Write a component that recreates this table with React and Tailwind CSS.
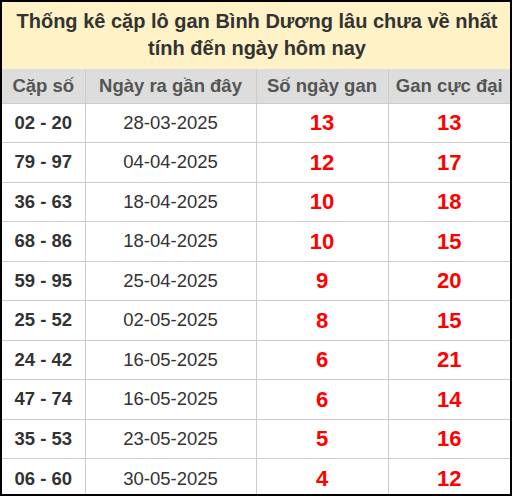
const rows = [
  ['02 - 20', '28-03-2025', 13, 13],
  ['79 - 97', '04-04-2025', 12, 17],
  ['36 - 63', '18-04-2025', 10, 18],
  ['68 - 86', '18-04-2025', 10, 15],
  ['59 - 95', '25-04-2025', 9, 20],
  ['25 - 52', '02-05-2025', 8, 15],
  ['24 - 42', '16-05-2025', 6, 21],
  ['47 - 74', '16-05-2025', 6, 14],
  ['35 - 53', '23-05-2025', 5, 16],
  ['06 - 60', '30-05-2025', 4, 12],
];

export default function App() {
  return (
    <div className="relative w-[512px] h-[496px] overflow-hidden bg-white font-['Liberation_Sans',Arial,sans-serif]">
      <div className="ml-[2px] mt-[2px]">
        <div className="bg-[#fff2c6] text-[#333] font-bold text-[20px] leading-[27px] text-center pt-[6px] pb-[7px]">
          Thống kê cặp lô gan Bình Dương lâu chưa về nhất
          <br />
          tính đến ngày hôm nay
        </div>
        <table className="w-[508px] table-fixed border-collapse">
          <colgroup>
            <col className="w-[83px]" />
            <col className="w-[171px]" />
            <col className="w-[132px]" />
            <col />
          </colgroup>
          <thead>
            <tr className="bg-[#ddd] text-[#555] text-[18.5px] font-bold h-[34px]">
              <th className="border-r border-[#ccc] font-bold">Cặp số</th>
              <th className="border-r border-[#ccc] font-bold">Ngày ra gần đây</th>
              <th className="border-r border-[#ccc] font-bold">Số ngày gan</th>
              <th className="font-bold">Gan cực đại</th>
            </tr>
          </thead>
          <tbody>
            {rows.map((r) => (
              <tr key={r[0]} className="h-[39.5px] border-t border-[#ccc] text-center">
                <td className="border-r border-[#ccc] text-[18.5px] font-bold text-[#333]">{r[0]}</td>
                <td className="border-r border-[#ccc] text-[18.5px] text-[#333]">{r[1]}</td>
                <td className="border-r border-[#ccc] text-[22px] font-bold text-[#f00]">{r[2]}</td>
                <td className="text-[22px] font-bold text-[#f00]">{r[3]}</td>
              </tr>
            ))}
          </tbody>
        </table>
      </div>
      <div className="absolute inset-0 border-2 border-black pointer-events-none" />
    </div>
  );
}
